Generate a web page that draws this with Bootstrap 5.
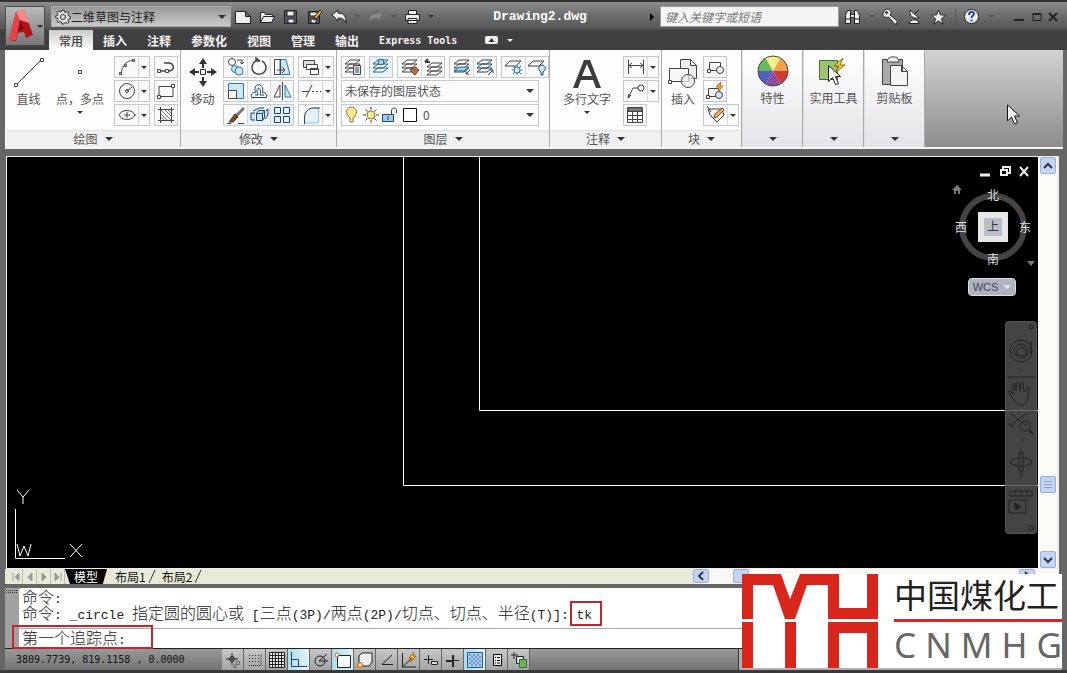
<!DOCTYPE html>
<html lang="zh-CN">
<head>
<meta charset="utf-8">
<meta name="viewport" content="width=device-width, initial-scale=1">
<title>Drawing2.dwg</title>
<link href="https://cdn.jsdelivr.net/npm/bootstrap@5.3.0/dist/css/bootstrap.min.css" rel="stylesheet">
<style>
body{font:12px/16px "Noto Sans CJK SC",sans-serif;color:#555;background:#666;overflow:hidden}
button,input,select{font:inherit;color:inherit}
button{background:none;border:0;padding:0;display:inline-flex;align-items:center;justify-content:center}
svg{display:block;flex:none;fill:none;stroke:#444;stroke-width:1}
.app-frame{min-height:100vh;border-top:2px solid #333;border-bottom:3px solid #3a3a3c}
.app-top{background:linear-gradient(#8b8b8b,#6e6e6e 13px,#555 27px,#404042 28px);padding-left:5px;padding-right:4px}
.app-logo{width:40px;height:40px;margin-top:4px;border:1px solid #4a4a4a;background:linear-gradient(#bbb,#777);gap:2px}
.title-row{height:28px;padding-top:1px;padding-left:6px}
.workspace{width:180px;height:21px;border:1px solid #aaa;background:linear-gradient(#999,#c9c9c9);color:#222;padding-left:3px}
.workspace select,.plain-select{appearance:none;border:0;background:none;outline:0;padding:0}
.tri{display:inline-block;width:0;height:0;border:4px solid transparent;border-top-color:#333;border-bottom:0}
.tri.s{border-width:3px;border-bottom:0}
.tri.dim{border-top-color:#555}
.quick{gap:7px;margin-left:3px}
.quick button{width:17px;height:20px}
.quick svg,.tools svg{stroke:#222;fill:#eee}
.doc-title{font:bold 13px/16px "Liberation Mono",monospace;color:#fff}
.search-box{width:179px;height:21px;border:1px solid #999;background:#f4f4f4;padding:0 4px;font-style:italic;border-radius:0}
.search-box::placeholder{color:#777;opacity:1}
.tools{width:155px;padding-left:5px}
.win-btns{width:44px;margin-left:20px;margin-right:5px}
.tab-row{height:20px;padding-left:4px}
.tab-row a{color:#f3f3f3;font-weight:bold;text-decoration:none;padding:2px 10px;line-height:18px;height:20px}
.tab-row a.on{background:linear-gradient(#ccc,#fff);color:#444;font-weight:500}
.tab-row a.lat{font-family:"DejaVu Sans Mono",monospace;font-size:10px}
.ribbon{margin:0 4px 0 5px;border-left:1px solid #fff;border-bottom:2px solid #f6f6f6;background:linear-gradient(#d2d2d2,#8e8c8e);height:99px}
.rpanel{background:#fdfdfd;border-right:1px solid #aaa;flex:none}
.rbody{padding:6px 2px 0 1px;height:80px}
.rfoot{height:17px;background:#f0f0f0;border-top:1px solid #e2e2e2;gap:7px}
.big{flex-direction:column;justify-content:flex-start;height:72px}
.big svg{margin-bottom:1px}
.rows{display:flex;flex-direction:column;gap:2px}
.rows>div{display:flex;gap:4px}
.grp{display:flex;border:1px solid #c6c9cc;background:#fafafa;height:22px}
.grp button{width:23px;height:20px}
.grp button+button{border-left:1px solid #d6d8da}
.grp button.dd{width:11px}
.grp button:only-child{width:22px}
.grp .hot{background:#e8f4fa}
.combo{border:1px solid #c6c9cc;height:22px;width:198px;padding:0 4px 0 3px;background:#fcfcfc}
.closed{width:61px;background:linear-gradient(#fff,#e4e4e8);border-left:1px solid #ddd;padding:5px 0 6px}
.closed svg{margin-bottom:3px}
.sep{height:7px;background:#666}
.work{margin:0 8px 0 6px;border:1px solid #eee;border-right-width:2px}
.canvas{background:#000;flex:1;overflow:hidden;min-width:0}
.canvas .lines{position:absolute;inset:0;width:100%;height:100%;stroke:#fff}
.ucs{position:absolute;left:6px;bottom:7px}
.mdi{position:absolute;top:8px;right:8px;gap:7px}
.cube{position:absolute;top:26px;right:0}
.wcs{position:absolute;top:121px;right:22px;width:48px;height:18px;background:#aeb3c0;border:1px solid #ddd;border-radius:4px;color:#445;font:11px/14px "Liberation Sans",sans-serif;gap:5px}
.navbar-v{position:absolute;right:1px;bottom:34px;width:32px;height:213px}
.vscroll{width:19px;background:#fbfbf8;border-left:2px solid #fff}
.sbtn{width:16px;height:17px;background:#c5d3f4;border:1px solid #9bb0d8;border-radius:2px}
.sheet-row{height:15px;background:#e8ead8;margin:0 8px 0 5px;color:#000}
.sheet-row svg{stroke:#999}
.vcr{width:14px;height:15px;border-right:1px solid #bbb!important}
.sheet{height:15px;line-height:15px;color:#111;text-decoration:none}
.sheet.on{background:#000;color:#fff;width:42px;text-align:center;clip-path:polygon(0 0,100% 0,90% 100%,12% 100%)}
.hscroll{width:366px;background:#f8f8f5}
.cmd{margin:0 7px 0 5px;background:#a0a0a0}
.cmd-inner{margin-left:14px;background:#fff;color:#222;font:13px/16px "Liberation Mono",monospace;border-radius:3px 0 0 0}
.cmd-inner .zh{font:16px/16px "Noto Sans CJK SC",sans-serif;font-weight:300}
.cmd-inner pre{margin:0;font:inherit;padding-left:3px;height:40px;line-height:16px;overflow:visible}
.cmd-inner pre div{height:16px}
.prompt{height:20px;border-top:1px solid #aaa;padding-left:3px}
.prompt input{border:0;outline:0;background:none;min-width:0}
.note-box{position:absolute;border:2px solid #c0272c;pointer-events:none}
.status{height:22px;margin:0 5px;border-top:1px solid #222;background:linear-gradient(#999,#747474);color:#111;font:10px/22px "DejaVu Sans Mono",monospace}
.coords{width:217px;padding-left:11px}
.status button{width:22px;height:21px;border-right:1px solid #666;background:linear-gradient(#c6c6c6,#a4a4a4)}
.status button.lit{background:linear-gradient(90deg,#a8dcec,#e2f4f8)}
.status svg{stroke:#222}
.tray{width:324px;background:#b0b0b0;border-left:1px solid #333}
.brand{position:absolute;right:5px;bottom:2px;width:320px;height:94px;background:#fff}
.brand-name{font:33px/40px "Noto Sans CJK SC",sans-serif;color:#222;height:45px}
.brand-lat{font:35px/38px "Noto Sans",sans-serif;color:#666;padding-top:4px}
.brand-txt{width:168px;margin-left:16px}
.pointer{position:absolute;left:82px;top:54px}
</style>
</head>
<body>
<div class="app-frame d-flex flex-column position-relative">
<header class="app-top d-flex">
 <button class="app-logo" aria-label="菜单"><svg width="27" height="34" viewBox="0 0 27 34" style="stroke:none"><path fill="#b41217" d="M1 31 8 3l8-2 9 25-7 3-2-6-6 1-2 8z"/><path fill="#e8414a" d="M1 31 8 3l4 8-4 20z"/><path fill="#f58a8d" d="M8 3l8-2 5 13-9-3z"/><path fill="#781014" d="m12 12 4 8-6 2z"/></svg><span class="tri s"></span></button>
 <div class="flex-fill">
  <div class="title-row d-flex align-items-center">
   <div class="workspace d-flex align-items-center"><svg width="16" height="16" viewBox="0 0 16 16" style="stroke:#333;fill:#ddd"><path d="m7 1 2 0 .5 2 1.500.6L13 2.500l1 1.500-1 1.500.6 1.500 2 .5v2l-2 .5-.6 1.500 1 1.500-1.500 1.500-1.500-1-1.500.5L9 15H7l-.5-2-1.500-.5-2 1L1.800 12l1.200-1.500L2.500 9l-2-.5V7l2-.5L3 5 2 3.500 3.500 2 5 3l1.500-.5z"/><circle cx="8" cy="8" r="2.500"/></svg>
    <select class="flex-fill" aria-label="工作空间"><option>二维草图与注释</option></select><span class="tri me-1"></span></div>
   <div class="quick d-flex align-items-center">
    <button aria-label="新建"><svg width="16" height="16"><path d="M.5 2.500h10l5 5v7H.5zM10.500 2.500v5h5"/></svg></button>
    <button aria-label="打开"><svg width="16" height="16"><path d="M1.500 13.500v-10h4l1 2h7v2M1.500 13.500l3-6h11l-3 6z"/></svg></button>
    <button aria-label="保存"><svg width="16" height="16"><path style="fill:#556" d="M1.500 1.500h12v13h-12z"/><path d="M4 2h7v5H4zM5 10h6v4H5z"/></svg></button>
    <button aria-label="另存为"><svg width="16" height="16"><path style="fill:#556" d="M1.500 2.500h11v12h-11z"/><path d="M3 3h7v4H3zM4 10h5v4H4z"/><path style="fill:#f1b24a" d="m7 11 1-4 5-6 2 2-5 6z"/></svg></button>
    <button aria-label="放弃"><svg width="16" height="16"><path d="m1 6 6-5v3c6 0 8 3 8 10-2-4-4-5-8-5v3z"/></svg></button>
    <span class="tri s dim"></span>
    <button aria-label="重做"><svg width="16" height="16" style="fill:#888;stroke:#666"><path d="M15 6 9 1v3C3 4 1 7 1 14c2-4 4-5 8-5v3z"/></svg></button>
    <span class="tri s dim"></span>
    <button aria-label="打印"><svg width="17" height="16"><path d="M4.500 5V1.500h8V5M1.500 5.500h14v6h-14zM4 9.500h9v5H4z"/></svg></button>
    <span class="tri s"></span>
   </div>
   <div class="doc-title flex-fill text-center">Drawing2.dwg</div>
   <svg width="14" height="10" style="fill:#000;stroke:none"><path d="M4 1v8l4-4z"/></svg>
   <input class="search-box" placeholder="键入关键字或短语" aria-label="搜索">
   <div class="tools d-flex align-items-center justify-content-between">
    <button aria-label="搜索"><svg width="17" height="16"><path d="M1.500 14.500v-8l2-5h3v13zM10.500 14.500v-13h3l2 5v8zM6.500 5.500h4v3h-4zM2 10h4M11 10h4"/></svg></button><span class="tri s dim"></span>
    <button aria-label="密钥"><svg width="17" height="17"><path d="M8 7 15.500 13l-1 3-2 0-6-7C1 11-1 6 3 2c4-3 8 2 5 5z"/><circle cx="4.500" cy="4.500" r="1" style="fill:#444"/></svg></button>
    <button aria-label="通讯中心"><svg width="16" height="17"><path d="M3 2c-1 6 3 9 9 8zM2 15.500c1-5 9-5 10 0zM7 6l5-4"/></svg></button>
    <button aria-label="收藏夹"><svg width="17" height="16"><path d="m8.500 1 2 5h5l-4 4 1.500 5-4.500-3L4 15l1.500-5-4-4h5z"/></svg></button>
    <span style="width:1px;height:16px;background:#555"></span>
    <button aria-label="帮助"><svg width="17" height="17"><circle cx="8.500" cy="8.500" r="7"/><path d="M6 7c0-4 5-3.500 5-1 0 2-2.500 1.500-2.500 4M8.500 11.500v2" style="fill:none;stroke:#24489b;stroke-width:2"/></svg></button><span class="tri s dim"></span>
   </div>
   <div class="win-btns d-flex justify-content-between">
    <button aria-label="最小化"><svg width="11" height="12" style="stroke:#222;stroke-width:2"><path d="M0 9h10"/></svg></button>
    <button aria-label="最大化"><svg width="10" height="12" style="stroke:#222"><path d="M1 2.500h8v7H1zM1 3.500h8"/></svg></button>
    <button aria-label="关闭"><svg width="10" height="12" style="stroke:#222;stroke-width:2"><path d="m1 2 8 8m0-8-8 8"/></svg></button>
   </div>
  </div>
  <nav class="tab-row d-flex"><a class="on" href="#">常用</a><a href="#">插入</a><a href="#">注释</a><a href="#">参数化</a><a href="#">视图</a><a href="#">管理</a><a href="#">输出</a><a class="lat" href="#">Express Tools</a>
   <button class="ms-3 gap-2" aria-label="最小化功能区"><svg width="16" height="10" style="fill:#eee;stroke:none"><rect x="2" y="1" width="13" height="8" rx="2"/><path fill="#333" d="m8.500 3 3 4h-6z"/></svg><span class="tri s" style="border-top-color:#eee"></span></button></nav>
 </div>
</header>

<section class="ribbon d-flex">
 <div class="rpanel">
  <div class="rbody d-flex">
   <button class="big" style="width:43px"><svg width="34" height="34"><path d="m4 29 25-25"/><path fill="#fff" d="M2.500 27.500h3v3h-3zM28.500 2.500h3v3h-3z"/></svg>直线</button>
   <button class="big me-1" style="width:60px"><svg width="34" height="34"><path d="M15.500 14.500h3v3h-3z"/></svg>点，多点<span class="tri s mt-1"></span></button>
   <div class="rows">
    <div><span class="grp"><button aria-label="圆弧"><svg width="20" height="20"><path d="M4 17C5 9 9 4 16 3"/><path fill="#fff" d="M2.500 15.500h2v2h-2zM7.500 7.500h2v2h-2zM15.500 2.500h2v2h-2z"/></svg></button><button class="dd" aria-label="更多圆弧"><i class="tri s"></i></button></span><span class="grp"><button aria-label="多段线"><svg width="20" height="20"><path d="M3 14h9c7 0 7-8 0-8H8" stroke-width="1.500"/><path fill="#fff" d="M1.500 12.500h3v3h-3zM9.500 12.500h3v3h-3z"/></svg></button></span></div>
    <div><span class="grp"><button aria-label="圆"><svg width="20" height="20"><circle cx="10" cy="10" r="7.500"/><path d="m10 10 5-4"/><circle cx="10" cy="10" r="1.500"/></svg></button><button class="dd" aria-label="更多圆"><i class="tri s"></i></button></span><span class="grp"><button aria-label="矩形"><svg width="20" height="20"><path d="M3 5.500h14v10H3z"/><path fill="#fff" d="M1.500 14.500h3v3h-3zM15.500 3.500h3v3h-3z"/></svg></button></span></div>
    <div><span class="grp"><button aria-label="椭圆"><svg width="20" height="20"><ellipse cx="10" cy="10" rx="7.500" ry="4.500"/><path d="M10 7v6M7 10h6M17 10h2"/></svg></button><button class="dd" aria-label="更多椭圆"><i class="tri s"></i></button></span><span class="grp"><button aria-label="图案填充"><svg width="20" height="20"><path d="M4.500 2v16M15.500 2v16M2 4.500h16M2 15.500h16"/><path stroke="#777" d="M5 5l10 10M5 9l6 6M9 5l6 6M5 12l3 3M12 5l3 3"/></svg></button></span></div>
   </div>
  </div>
  <div class="rfoot d-flex align-items-center justify-content-center">绘图<span class="tri"></span></div>
 </div>

 <div class="rpanel">
  <div class="rbody d-flex">
   <button class="big" style="width:41px"><svg width="30" height="34" style="fill:#333;stroke:none"><path d="m15 2 4 6h-3v4h-2V8h-3zM15 31l-4-6h3v-4h2v4h3zM1 16l6-4v3h4v2H7v3zM29 16l-6-4v3h-4v2h4v3z"/><path fill="#fff" stroke="#333" d="M12.500 13.500h5v5h-5z"/></svg>移动</button>
   <div class="rows">
    <div><span class="grp"><button aria-label="复制"><svg width="20" height="20"><circle cx="6" cy="5" r="3.500"/><path d="M11 3h5v4m-2-2 2 2 2-2"/><circle cx="9" cy="12" r="3.500" fill="#cbe6f5" stroke="#2a7bb0"/><circle cx="13" cy="14" r="4" fill="#cbe6f5" stroke="#2a7bb0"/></svg></button><button aria-label="旋转"><svg width="20" height="20"><path d="M7 4a7 7 0 1 0 6 0M7 4h4M7 4V1l4 3" stroke-width="1.500"/></svg></button><button aria-label="拉伸"><svg width="20" height="20"><path fill="#cbe6f5" stroke="#2a7bb0" d="M8 2.500h6l4 15h-10z"/><path d="M2.500 2.500h6v15h-6zM5 13h8m-3-3 3 3-3 3"/></svg></button></span><span class="grp"><button aria-label="修剪"><svg width="20" height="20"><path fill="#ddd" d="M2.500 3.500h11v7h-11z"/><path fill="#fff" d="M5.500 7.500h11v5h-11zM9.500 11.500h8v6h-8z"/></svg></button><button class="dd" aria-label="更多"><i class="tri s"></i></button></span></div>
    <div><span class="grp"><button aria-label="缩放"><svg width="20" height="20"><path fill="#cbe6f5" stroke="#2a7bb0" d="M2.500 2.500h15v15h-15z"/><path fill="#fff" d="M2.500 9.500h8v8h-8z"/></svg></button><button aria-label="偏移"><svg width="20" height="20"><path stroke="#246" d="M2.500 16.500c-1-4 1-5 4-5C3 1 16 1 13.500 11.500c3 0 5 1 4 5zM6 14h3c-4-9 5-9 2 0h4"/></svg></button><button aria-label="镜像"><svg width="20" height="20"><path d="M8 4v12H2zM10.500 1v18"/><path fill="#cbe6f5" stroke="#2a7bb0" d="M13 4v12h6z"/></svg></button></span><span class="grp"><button aria-label="打断"><svg width="20" height="20"><path d="M1 10.500h7M5 16l6-12M11 10.500h2m2 0h2m2 0h1"/></svg></button><button class="dd" aria-label="更多"><i class="tri s"></i></button></span></div>
    <div><span class="grp"><button aria-label="删除"><svg width="20" height="20"><path d="m18 3-8 8" stroke="#777" stroke-width="3"/><path fill="#8a4820" stroke="#532" d="m9 9 3 3-5 5H3z"/><path d="M1 18.500h4M12 18.500h6"/></svg></button><button class="hot" aria-label="分解"><svg width="20" height="20"><path fill="#cbe6f5" stroke="#246" d="M7.500 8.500h6v7h-6zM7.500 8.500l2-3h6l-2 3M13.500 15.500l2-3v-7M6 8H2v7h4M4 6l6-3h5M17 6l2-2v6l-3 4"/></svg></button><button class="hot" aria-label="阵列"><svg width="20" height="20"><path stroke="#246" fill="#e3f2fa" d="M2.500 2.500h6v6h-6zM11.500 2.500h6v6h-6zM2.500 11.500h6v6h-6zM11.500 11.500h6v6h-6z"/></svg></button></span><span class="grp"><button aria-label="圆角"><svg width="20" height="20"><path fill="#e3f2fa" stroke="#9bd" d="M3.500 18V12c0-5 5-9 9-9h5v15z"/><path d="M3.500 19v-7c0-5 4-9 9-9H19"/></svg></button><button class="dd" aria-label="更多"><i class="tri s"></i></button></span></div>
   </div>
  </div>
  <div class="rfoot d-flex align-items-center justify-content-center">修改<span class="tri"></span></div>
 </div>

 <svg width="0" height="0" class="position-absolute"><defs><g id="layers"><path fill="#fff" d="m2 15 5-4h10l-5 4zM2 11l5-4h10l-5 4zM2 7l5-4h10l-5 4z"/></g></defs></svg>
 <div class="rpanel">
  <div class="rbody px-0">
   <div class="rows ms-1">
    <div><span class="grp"><button aria-label="图层特性"><svg width="20" height="20"><use href="#layers"/><path fill="#d8ecf8" d="M10.500 8.500h7v9h-7zM12 11h4M12 13h4M12 15h4"/></svg></button></span><span class="grp"><button class="hot" aria-label="置为当前"><svg width="20" height="20" style="stroke:#1f6591"><use href="#layers"/><circle cx="10" cy="5" r="3" fill="#9cd0ee"/></svg></button></span><span class="grp"><button aria-label="匹配"><svg width="20" height="20"><use href="#layers"/><path fill="#b7713a" stroke="#643" d="m10 13 5-3 4 3-4 5z"/></svg></button><button aria-label="上一个"><svg width="20" height="20"><g transform="translate(2 3)"><use href="#layers"/></g><path fill="none" stroke-width="2" d="M7 5H2m3-3L2 5"/></svg></button></span><span class="grp"><button aria-label="隔离"><svg width="20" height="20"><use href="#layers"/><path fill="#9cd0ee" stroke="#1f6591" d="m2 14 5-4h10l-5 4z"/><path d="m18 13-4 4v-3m0 3h3"/></svg></button><button aria-label="取消隔离"><svg width="20" height="20" style="stroke:#246"><use href="#layers"/><path d="m13 18 5-5v3m0-3h-3"/></svg></button></span><span class="grp"><button aria-label="冻结"><svg width="20" height="20"><path d="m1 9 5-5h11l-5 5z"/><path stroke="#2a7bb0" fill="#cbe6f5" d="M13 8v10M8 13h10M9 9l8 8M17 9l-8 8"/><circle cx="13" cy="13" r="3" stroke="#2a7bb0" fill="#cbe6f5"/></svg></button><button aria-label="关闭"><svg width="20" height="20"><path d="m1 9 5-5h11l-5 5z"/><path stroke="#246" fill="#cbe6f5" d="M14 15c-4-3-2-7 1-7s5 4 1 7v3h-2z"/></svg></button></span></div>
    <div class="combo align-items-center"><select class="plain-select flex-fill" aria-label="图层状态"><option>未保存的图层状态</option></select><span class="tri"></span></div>
    <button class="combo"><svg width="56" height="18" viewBox="0 0 56 18"><path fill="#fbe98c" stroke="#875" d="M5 12C-2 6 3 1 6.500 1S15 6 8 12v4H5z"/><circle cx="26" cy="9" r="4" fill="#fbe98c" stroke="#875"/><path d="M26 1v3M26 14v3M18 9h3M31 9h3M20.500 3.500l2 2M29.500 12.500l2 2M31.500 3.500l-2 2M22.500 12.500l-2 2"/><path fill="#9cd0ee" stroke="#246" d="M37.500 8.500h11v7h-11zM43 10v4"/><path stroke="#246" d="M46.500 8V5c0-4 5-4 5 0v2"/></svg><svg width="18" height="18" style="fill:#fff;stroke:#111"><path d="M2.500 2.500h13v13h-13z"/></svg><span class="flex-fill text-start ms-1">0</span><span class="tri"></span></button>
   </div>
  </div>
  <div class="rfoot d-flex align-items-center justify-content-center">图层<span class="tri"></span></div>
 </div>

 <div class="rpanel">
  <div class="rbody d-flex">
   <button class="big" style="width:72px"><svg width="34" height="34" style="fill:#3c3c3e;stroke:none"><path d="M3 32 14 4h6l11 28h-5l-3-8H11l-3 8zM12 20h10L17 8z" fill-rule="evenodd"/></svg>多行文字<span class="tri s mt-1"></span></button>
   <div class="rows">
    <div><span class="grp"><button aria-label="线性"><svg width="20" height="20"><path d="M2.500 3v14M17.500 3v14M3 8.500h14M6 6 3 8.500 6 11M14 6l3 2.500-3 2.500"/></svg></button><button class="dd" aria-label="更多"><i class="tri s"></i></button></span></div>
    <div><span class="grp"><button aria-label="引线"><svg width="20" height="20"><path d="M2 17 7 7h5M2 17l1-4m-1 4 3-3"/><circle cx="15" cy="7" r="3"/></svg></button><button class="dd" aria-label="更多"><i class="tri s"></i></button></span></div>
    <div><span class="grp"><button aria-label="表格"><svg width="20" height="20"><path d="M2.500 2.500h15v15h-15zM2.500 6.500h15M2.500 10.500h15M2.500 14.500h15M7.500 6v11M12.500 6v11"/><path fill="#888" d="M3 3h14v3H3z"/></svg></button></span></div>
   </div>
  </div>
  <div class="rfoot d-flex align-items-center justify-content-center">注释<span class="tri"></span></div>
 </div>

 <div class="rpanel">
  <div class="rbody d-flex">
   <button class="big" style="width:40px"><svg width="34" height="34"><path fill="#eee" d="M14.500 3.500h10l6 6v13h-16zM24.500 3.500v6h6"/><path fill="#f7f7f7" d="M3.500 12.500h19v13h-19z"/><circle cx="22" cy="25" r="6.500" fill="#eee" fill-opacity=".7"/><path fill="#fff" d="M2.500 24.500h3v3h-3z"/></svg>插入</button>
   <div class="rows">
    <div><span class="grp"><button aria-label="创建"><svg width="20" height="20"><path d="M4.500 5.500h11v8h-11z"/><circle cx="15" cy="13" r="3.500" fill="#eee"/><path fill="#fff" d="M2.500 12.500h3v3h-3z"/></svg></button></span></div>
    <div><span class="grp"><button aria-label="编辑"><svg width="20" height="20"><path d="M3.500 7.500h11v8h-11z"/><path fill="#fff" d="M1.500 14.500h3v3h-3z"/><circle cx="14" cy="14" r="3.500" fill="#cbe6f5"/><path fill="#f1b24a" stroke="#b87316" d="m16 1-5 5h3l-1 5 5-6h-3z"/></svg></button></span></div>
    <div><span class="grp"><button aria-label="编辑属性"><svg width="20" height="20"><path d="M2 4h5l9 0 2 6-7 7-7-7zM1 1l4 6"/><path fill="#f1b24a" stroke="#843" d="m8 13 1-4 7-6 2 2-7 7z"/></svg></button><button class="dd" aria-label="更多"><i class="tri s"></i></button></span></div>
   </div>
  </div>
  <div class="rfoot d-flex align-items-center justify-content-center">块<span class="tri"></span></div>
 </div>

 <button class="rpanel closed flex-column justify-content-between"><span class="d-flex flex-column align-items-center"><svg width="32" height="32" viewBox="-16 -16 32 32" style="stroke:none"><path fill="#f6ee8a" d="M0 0-7.500-13A15 15 0 0 1 7.500-13z"/><path fill="#f2a04a" d="M0 0 7.500-13A15 15 0 0 1 15 0z"/><path fill="#d13a35" d="M0 0h15A15 15 0 0 1 7.500 13z"/><path fill="#8b4d9c" d="M0 0 7.500 13A15 15 0 0 1-7.500 13z"/><path fill="#4f5fc0" d="M0 0-7.500 13A15 15 0 0 1-15 0z"/><path fill="#67b95b" d="M0 0h-15A15 15 0 0 1-7.500-13z"/><circle r="15" stroke="#444"/></svg>特性</span><span class="tri"></span></button>
 <button class="rpanel closed flex-column justify-content-between"><span class="d-flex flex-column align-items-center"><svg width="32" height="32"><path fill="#9cc46e" stroke="#456b2d" d="M2.500 5.500h18v19h-18z"/><path fill="#f3cf3c" stroke="#8a6a10" d="m26 3-9 8h5l-4 7 10-8h-5z"/><path fill="#fff" stroke="#222" d="M11.500 10.500v16l4-4 3 7 3-1-3-7h5z"/></svg>实用工具</span><span class="tri"></span></button>
 <button class="rpanel closed flex-column justify-content-between"><span class="d-flex flex-column align-items-center"><svg width="32" height="32"><path fill="#aaa" d="M4.500 4.500h20v25h-20z"/><path fill="#eee" d="M9 7c0-7 12-7 12 0z"/><path fill="#f4f4f4" d="M12.500 10.500h11l6 6v14h-17zM23.500 10.500v6h6"/></svg>剪贴板</span><span class="tri"></span></button>
 <div class="flex-fill position-relative"><svg class="pointer" width="14" height="22"><path fill="#fff" stroke="#111" d="M.5 1v16l4-4 3 7 3-1-3-7h5z"/></svg></div>
</section>
<div class="sep"></div>

<main class="work d-flex flex-fill">
 <div class="canvas position-relative">
  <svg class="lines"><path d="M396.500 0v328.500H2000M472.500 0v253.500H2000"/></svg>
  <svg class="ucs" width="80" height="74" style="stroke:#fff"><path d="M2.500 22v49.500H52M4 3l6 7 6-7M10 10v7M57 57l12 13M69 57 57 70M4 57l3 12 4-10 4 10 3-12"/></svg>
  <div class="mdi d-flex">
   <button aria-label="最小化"><svg width="14" height="12" style="stroke:#eee;stroke-width:3"><path d="M2 10h10"/></svg></button><button aria-label="还原"><svg width="12" height="12" style="stroke:#eee;stroke-width:2"><path d="M4 4V2h7v6H9M2 5h6v5H2z"/></svg></button><button aria-label="关闭"><svg width="12" height="12" style="stroke:#eee;stroke-width:2"><path d="m2 2 8 9m0-9-8 9"/></svg></button>
  </div>
  <svg class="cube" width="86" height="90" style="stroke:none;fill:#ddd;font:12px 'Noto Sans CJK SC',sans-serif"><circle cx="41" cy="44" r="31" fill="none" stroke="#444" stroke-width="6"/><path fill="#777" d="m0 7 5-5 5 5H8v4H6V8H4v3H2V7zM75 78h8l-4 5z"/><path fill="#e6e6e6" d="M26 29h30v30H26z"/><path fill="#b9bec8" d="M32 35h18v18H32z"/><text x="35" y="17">北</text><text x="35" y="81">南</text><text x="3" y="49">西</text><text x="67" y="49">东</text><text x="35" y="48" fill="#334">上</text></svg>
  <button class="wcs">WCS<span class="tri" style="border-top-color:#dfe2ea"></span></button>
  <svg class="navbar-v" viewBox="0 0 32 213" style="stroke:#222"><rect x=".5" y=".5" width="31" height="212" rx="3" fill="#505050" fill-opacity=".85" stroke="#555"/><circle cx="16" cy="30" r="11"/><circle cx="16" cy="30" r="7"/><path d="M12 34c-1-10 9-9 9-3v4zM26 20v12M2 56h28M15 49h2M15 119h2M15 156h2"/><path d="M7 76c-5-7-3-8 2-3l-2-9c1-3 3 0 4 6V62c2-2 3 1 4 8l1-9c3-1 2 6 3 10l4-6c2 1 0 6 0 10-1 12-10 12-16 1zM5 92l17 13M22 92 5 105M5 105h4m-4 0v-4"/><circle cx="20" cy="105" r="5"/><path d="m24 109 4 4" stroke-width="2"/><ellipse cx="16" cy="141" rx="11" ry="4"/><path d="M14 132h4v18h-4zM16 127v5M16 150v5M5 170h22v5H5zM10 170v5M16 170v5M22 170v5M4 179h17v13H4z"/><path fill="#222" d="M10 182v7l6-3z"/><circle cx="26" cy="207" r="2.500"/><circle cx="26" cy="6" r="2"/></svg>
 </div>
 <div class="vscroll d-flex flex-column justify-content-between">
  <button class="sbtn" aria-label="向上"><svg width="12" height="10" style="stroke:#335;stroke-width:2"><path d="m2 7 4-4 4 4"/></svg></button>
  <div class="flex-fill"></div><button class="sbtn" aria-label="滚动"><svg width="10" height="10" style="stroke:#8aa"><path d="M1 1.500h8M1 4.500h8M1 7.500h8"/></svg></button><div style="flex:0 0 58px"></div>
  <button class="sbtn" aria-label="向下"><svg width="12" height="10" style="stroke:#335;stroke-width:2"><path d="m2 3 4 4 4-4"/></svg></button>
 </div>
</main>
<div class="sheet-row d-flex">
 <div class="d-flex ps-1"><button class="vcr" aria-label="首个"><svg width="10" height="10"><path fill="#999" d="M2 1v8M8 1v8L4 5z"/></svg></button><button class="vcr" aria-label="上一个"><svg width="10" height="10"><path fill="#999" d="M7 1v8L3 5z"/></svg></button><button class="vcr" aria-label="下一个"><svg width="10" height="10"><path fill="#999" d="M3 1v8l4-4z"/></svg></button><button class="vcr" aria-label="末个"><svg width="10" height="10"><path fill="#999" d="M8 1v8M2 1v8l4-4z"/></svg></button></div>
 <a class="sheet on" href="#">模型</a><a class="sheet ms-1 ps-1" href="#">布局1</a><svg width="12" height="15" style="stroke:#333"><path d="M3 14 9 1"/></svg><a class="sheet ms-1" href="#">布局2</a><svg width="12" height="15" style="stroke:#333"><path d="M3 14 9 1"/></svg>
 <div class="flex-fill"></div>
 <div class="hscroll d-flex"><button class="sbtn" style="height:14px" aria-label="向左"><svg width="10" height="10" style="stroke:#335;stroke-width:2"><path d="M7 1 3 5l4 4"/></svg></button><button class="sbtn ms-4" style="height:14px" aria-label="水平滚动"></button><div class="flex-fill"></div><button class="sbtn me-4" style="height:14px" aria-label="向右"><svg width="10" height="10" style="stroke:#335;stroke-width:2"><path d="m3 1 4 4-4 4"/></svg></button></div>
</div>
<div class="sep" style="height:4px"></div>
<section class="cmd position-relative">
 <svg class="position-absolute" width="13" height="6" style="stroke:#333;stroke-dasharray:1 1"><path d="M1 2.500h11M1 4.500h11"/></svg>
 <div class="cmd-inner">
  <pre><div><span class="zh">命令</span>:</div><div><span class="zh">命令</span>: _circle <span class="zh">指定圆的圆心或</span> [<span class="zh">三点</span>(3P)/<span class="zh">两点</span>(2P)/<span class="zh">切点、切点、半径</span>(T)]: <span class="position-relative">tk<i class="note-box" style="inset:-7px -10px -3px -7px"></i></span></div></pre>
  <div class="prompt d-flex align-items-center position-relative"><label for="cmdline"><span class="zh">第一个追踪点</span>:</label><input id="cmdline" class="flex-fill"><i class="note-box" style="left:-7px;top:-4px;width:141px;height:24px"></i></div>
 </div>
</section>
<footer class="status d-flex">
 <div class="coords">3809.7739, 819.1158 , 0.0000</div>
 <button aria-label="推断约束"><svg width="18" height="18"><path d="M2 8h12M8 2v12"/><circle cx="8" cy="8" r="2.500"/><path stroke="#666" d="M12.500 10.500h3v3h-3zM10 14h2v3h-2z"/></svg></button>
 <button aria-label="捕捉"><svg width="18" height="18"><path stroke-dasharray="1 2" d="M3 4.500h10M3 7.500h10M3 10.500h10"/><path stroke-dasharray="1 1" d="M3 14.500h12V3"/></svg></button>
 <button aria-label="栅格"><svg width="18" height="18"><path fill="#eee" d="M1.500 1.500h15v15h-15z"/><path d="M4.500 1v16M7.500 1v16M10.500 1v16M13.500 1v16M1 4.500h16M1 7.500h16M1 10.500h16M1 13.500h16"/></svg></button>
 <button class="lit" aria-label="正交"><svg width="18" height="18" style="stroke:#246"><path d="M1.500 1v14.500H17M1.500 8.500h7v7"/></svg></button>
 <button aria-label="极轴"><svg width="18" height="18"><circle cx="8" cy="10" r="5"/><path d="M15 3 7 10h9"/></svg></button>
 <button class="lit" aria-label="对象捕捉"><svg width="18" height="18"><path fill="#f6fbff" d="M3.500 4.500h13v12h-13z"/><circle cx="3" cy="4" r="2" stroke="#c60" fill="#fff"/></svg></button>
 <button aria-label="三维捕捉"><svg width="18" height="18"><path fill="#eee" d="m3 5 3-3h10v9l-3 4H3z"/><circle cx="4" cy="14" r="2.500" stroke="#b60" fill="#fc8"/></svg></button>
 <button aria-label="对象追踪"><svg width="18" height="18"><path d="M14 4 4 13.500h11"/></svg></button>
 <button aria-label="动态UCS"><svg width="18" height="18"><path d="M2.500 2v14H16M2.500 16 12 7"/><path fill="#f9c04a" stroke="#a60" d="m14 1-5 6h3l-1 4 5-6h-3z"/></svg></button>
 <button aria-label="动态输入"><svg width="18" height="18"><path d="M2 8.500h9M6.500 4v9"/><path fill="#ddd" d="M9.500 10.500h6v3h-6z"/></svg></button>
 <button aria-label="线宽"><svg width="18" height="18"><path stroke-width="2" d="M2 10h7M9 4v12"/><path d="M9 9.500h6"/></svg></button>
 <button class="lit" aria-label="透明度"><svg width="18" height="18"><path fill="#a9ceec" stroke="#258" d="M1.500 1.500h15v15h-15z"/><path stroke="#6b9ccc" stroke-width="2" stroke-dasharray="2 2" d="M3 4h12M3 8h12M3 12h12M5 6h11M5 10h11M5 14h11"/></svg></button>
 <button aria-label="快捷特性"><svg width="18" height="18"><path fill="#eee" stroke="#000" d="M5.500 3.500h8v11h-8zM7 6.500h1m1 0h3M7 9.500h1m1 0h3M7 12h1m1 0h3"/></svg></button>
 <button aria-label="选择循环"><svg width="18" height="18"><path d="M1 4h7M4 1v7"/><path fill="#ddd" d="M6.500 5.500h7v7h-7z"/><path fill="#72b04f" stroke="#274" d="M9.500 8.500h7v8h-7z"/></svg></button>
 <div class="tray ms-auto"></div>
</footer>
<aside class="brand d-flex">
 <svg width="136" height="94" style="fill:#d9261c;stroke:none"><path d="M0 0h39l9 25L58 0h39v34h28V0h11v45H86V11H65L53 45H43L31 11H11v34H0zM0 48h11v46H0zM43 48h11v46H43zM86 48h50v46h-11V59H97v35H86z"/></svg>
 <div class="brand-txt"><div class="brand-name">中国煤化工</div><div style="height:3px;background:#d9261c"></div><div class="brand-lat d-flex justify-content-between"><span>C</span><span>N</span><span>M</span><span>H</span><span>G</span></div></div>
</aside>
</div>
<script src="https://cdn.jsdelivr.net/npm/bootstrap@5.3.0/dist/js/bootstrap.bundle.min.js"></script>
</body>
</html>
